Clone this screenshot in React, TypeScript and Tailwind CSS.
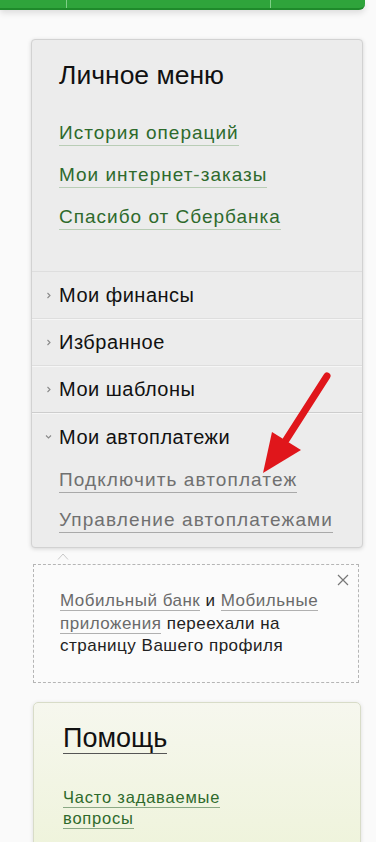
import React from 'react';

const font = { fontFamily: '"Liberation Sans", Arial, sans-serif' };

const Chevron = ({ down }: { down?: boolean }) => (
    <svg width="7" height="7" viewBox="0 0 7 7" className="mr-[7px]">
        {down ? (
            <path d="M1 2.5 L3.5 5 L6 2.5" fill="none" stroke="#8a8a8a" strokeWidth="1.1" />
        ) : (
            <path d="M2.5 1 L5 3.5 L2.5 6" fill="none" stroke="#8a8a8a" strokeWidth="1.1" />
        )}
    </svg>
);

const GreenLink = ({ children }: { children: React.ReactNode }) => (
    <span className="self-start text-[19px] tracking-[1px] leading-[24px] text-[#2e6a2c] border-b border-[#b9cdb6]">{children}</span>
);

const GrayLink = ({ children }: { children: React.ReactNode }) => (
    <span className="self-start text-[19px] tracking-[1.1px] leading-[24px] text-[#707070] border-b border-[#a9a9a9]">{children}</span>
);

const Row = ({ label, last }: { label: string; last?: boolean }) => (
    <div className={`h-[47px] flex items-center pl-[13px] border-b ${last ? 'border-[#cdcdcd]' : 'border-[#dedede]'} shadow-[0_1px_0_#f6f6f6]`}>
        <Chevron />
        <span className="text-[20px] tracking-[0.5px] text-[#111]">{label}</span>
    </div>
);

export default function App() {
    return (
        <div className="relative w-[376px] h-[842px] overflow-hidden bg-[#fafafa]" style={font}>
            {/* top green bar */}
            <div className="flex w-[365px] h-[10px] bg-[#2fa43b] border-b-2 border-[#1f8a2b] rounded-br-[6px] shadow-[0_3px_6px_rgba(0,0,0,0.12)]">
                <div className="w-[67px] border-r border-[#7fcf87]"></div>
                <div className="w-[204px] border-r border-[#7fcf87]"></div>
            </div>

            {/* personal menu */}
            <div className="ml-[31px] mt-[29px] w-[332px] h-[509px] bg-[#ececec] border border-[#d2d2d2] rounded-[4px] shadow-[0_1px_4px_rgba(0,0,0,0.15)] flex flex-col">
                <div className="px-[27px] pt-[20px] pb-[41px] flex flex-col border-b border-[#dedede]">
                    <h2 className="text-[26.5px] leading-[30px] text-[#111]">Личное меню</h2>
                    <div className="mt-[31px] flex flex-col gap-[17px]">
                        <GreenLink>История операций</GreenLink>
                        <GreenLink>Мои интернет-заказы</GreenLink>
                        <GreenLink>Спасибо от Сбербанка</GreenLink>
                    </div>
                </div>
                <Row label="Мои финансы" />
                <Row label="Избранное" />
                <Row label="Мои шаблоны" last />
                <div className="h-[47px] flex items-center pl-[13px]">
                    <Chevron down />
                    <span className="text-[20px] tracking-[0.5px] text-[#111]">Мои автоплатежи</span>
                </div>
                <div className="px-[27px] pt-[8px] flex flex-col gap-[15px]">
                    <GrayLink>Подключить автоплатеж</GrayLink>
                    <GrayLink>Управление автоплатежами</GrayLink>
                </div>
            </div>

            {/* caret */}
            <svg width="12" height="7" viewBox="0 0 12 7" className="ml-[57px] mt-[5px]">
                <path d="M1 6.5 L6 1 L11 6.5" fill="none" stroke="#c8c8c8" strokeWidth="1" />
            </svg>

            {/* notice */}
            <div className="relative ml-[33px] mt-[4px] w-[326px] h-[119px] border border-dashed border-[#b5b5b5] bg-[#fbfbfb] pl-[26px] pt-[25px] pr-[20px]">
                <svg width="12" height="12" viewBox="0 0 12 12" className="absolute right-[9px] top-[9px]">
                    <path d="M1 1 L11 11 M11 1 L1 11" stroke="#777" strokeWidth="1.2" />
                </svg>
                <p className="text-[17px] tracking-[0.5px] leading-[22.5px] text-[#222]">
                    <span className="text-[#6a6a6a] border-b border-[#b0b0b0]">Мобильный банк</span> и{' '}
                    <span className="text-[#6a6a6a] border-b border-[#b0b0b0]">Мобильные</span>
                    <br />
                    <span className="text-[#6a6a6a] border-b border-[#b0b0b0]">приложения</span> переехали на
                    <br />
                    страницу Вашего профиля
                </p>
            </div>

            {/* help */}
            <div className="ml-[33px] mt-[19px] w-[328px] h-[160px] rounded-t-[5px] border border-[#d8dcc8] bg-gradient-to-b from-[#f6f7ee] to-[#eef3da] shadow-[0_1px_4px_rgba(0,0,0,0.12)] px-[29px] pt-[20px] flex flex-col">
                <span className="self-start text-[27px] leading-[30px] text-[#111] border-b border-[#555]">Помощь</span>
                <div className="mt-[33px] flex flex-col self-start text-[16.5px] tracking-[0.8px] leading-[20px] text-[#2e6a2c]">
                    <span className="self-start border-b border-[#8aa884]">Часто задаваемые</span>
                    <span className="self-start border-b border-[#8aa884]">вопросы</span>
                </div>
            </div>

            {/* red arrow */}
            <svg width="376" height="842" className="absolute left-0 top-0 pointer-events-none">
                <line x1="327" y1="376" x2="286" y2="440" stroke="#e0161b" strokeWidth="7" strokeLinecap="round" />
                <polygon points="272,432 301,450 263,473" fill="#e0161b" />
            </svg>
        </div>
    );
}
